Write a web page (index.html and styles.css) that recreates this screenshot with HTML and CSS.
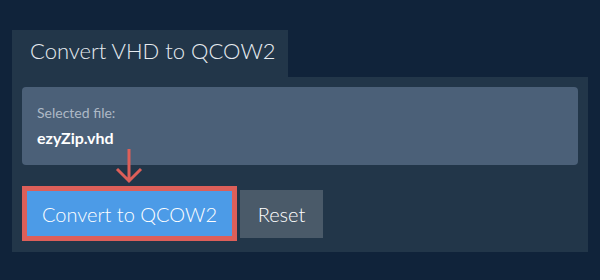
FILE: index.html
```html
<!DOCTYPE html>
<html>
<head>
<meta charset="utf-8">
<link rel="stylesheet" href="styles.css">
</head>
<body>
<div class="wrap">
  <div class="tab">Convert VHD to QCOW2</div>
  <div class="panel">
    <div class="file-box">
      <div class="label">Selected file:</div>
      <div class="filename">ezyZip.vhd</div>
    </div>
    <div class="actions">
      <div class="convert-wrap">
        <svg class="arrow" width="30" height="36" viewBox="0 0 30 36">
          <path d="M15 1 V33 M3 21 L15 33 L27 21" fill="none" stroke="#dd5f59" stroke-width="3"/>
        </svg>
        <button class="btn convert">Convert to QCOW2</button>
      </div>
      <button class="btn reset">Reset</button>
    </div>
  </div>
</div>
</body>
</html>
```
FILE: styles.css
```css
html, body {
  margin: 0;
  padding: 0;
  background: #10233a;
  width: 600px;
  height: 280px;
  overflow: hidden;
  font-family: Lato, "Noto Sans", sans-serif;
}
.wrap {
  padding: 30px 12px 0 12px;
}
.tab {
  width: 276px;
  height: 47px;
  box-sizing: border-box;
  background: #223649;
  color: #e6ebf0;
  font-size: 22px;
  font-weight: 300;
  padding-left: 18px;
  line-height: 41px;
}
.panel {
  background: #223649;
  padding: 10px 10px 11px 10px;
}
.file-box {
  background: #4b6078;
  border-radius: 4px;
  height: 78px;
  box-sizing: border-box;
  padding: 17px 15px 0 15px;
}
.label {
  color: #aeb9c6;
  font-size: 14px;
  font-weight: 400;
  line-height: 18px;
}
.filename {
  color: #ffffff;
  font-size: 16px;
  font-weight: 700;
  line-height: 20px;
  margin-top: 6px;
}
.actions {
  display: flex;
  align-items: center;
  margin-top: 21px;
}
.convert-wrap {
  position: relative;
}
.arrow {
  position: absolute;
  left: 92px;
  top: -38px;
}
.btn {
  font-family: Lato, "Noto Sans", sans-serif;
  color: #ffffff;
  border: none;
  margin: 0;
  cursor: pointer;
  font-weight: 300;
}
.convert {
  display: block;
  width: 215px;
  height: 55px;
  background: #4c9be7;
  border: 5px solid #dd5f59;
  font-size: 20px;
  padding: 0;
}
.reset {
  width: 83px;
  height: 48px;
  background: #4a5a69;
  font-size: 20px;
  margin-left: 3px;
  padding: 0;
}
```
